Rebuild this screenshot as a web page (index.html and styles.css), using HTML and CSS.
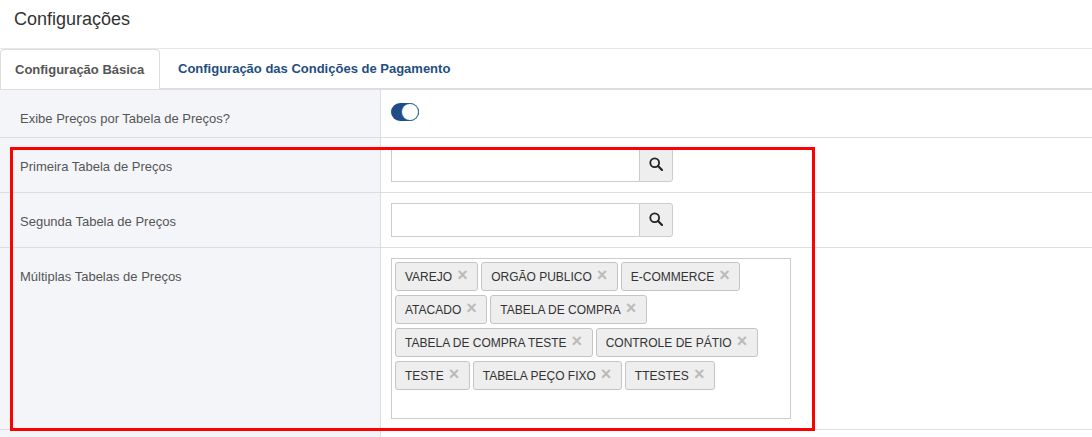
FILE: index.html
```html
<!DOCTYPE html>
<html lang="pt">
<head>
<meta charset="utf-8">
<title>Configurações</title>
<link rel="stylesheet" href="styles.css">
</head>
<body>
<header class="page-header">Configurações</header>
<nav class="tabs">
  <a class="tab tab-active">Configuração Básica</a>
  <a class="tab">Configuração das Condições de Pagamento</a>
</nav>
<main class="form">
  <div class="row row-toggle">
    <div class="label label-toggle">Exibe Preços por Tabela de Preços?</div>
    <div class="field"><span class="toggle"><span class="knob"></span></span></div>
  </div>
  <div class="row">
    <div class="label">Primeira Tabela de Preços</div>
    <div class="field">
      <div class="search"><span class="search-input"></span><span class="search-btn"><svg width="14" height="14" viewBox="0 0 14 14"><circle cx="5.7" cy="5.7" r="4.4" fill="none" stroke="#222" stroke-width="1.8"/><path d="M9 9l4 4" stroke="#222" stroke-width="2.2" stroke-linecap="round"/></svg></span></div>
    </div>
  </div>
  <div class="row">
    <div class="label">Segunda Tabela de Preços</div>
    <div class="field">
      <div class="search"><span class="search-input"></span><span class="search-btn"><svg width="14" height="14" viewBox="0 0 14 14"><circle cx="5.7" cy="5.7" r="4.4" fill="none" stroke="#222" stroke-width="1.8"/><path d="M9 9l4 4" stroke="#222" stroke-width="2.2" stroke-linecap="round"/></svg></span></div>
    </div>
  </div>
  <div class="row">
    <div class="label">Múltiplas Tabelas de Preços</div>
    <div class="field">
      <div class="tagbox">
        <span class="tag">VAREJO<i class="x">×</i></span>
        <span class="tag">ORGÃO PUBLICO<i class="x">×</i></span>
        <span class="tag">E-COMMERCE<i class="x">×</i></span>
        <span class="tag">ATACADO<i class="x">×</i></span>
        <span class="tag">TABELA DE COMPRA<i class="x">×</i></span>
        <span class="tag">TABELA DE COMPRA TESTE<i class="x">×</i></span>
        <span class="tag">CONTROLE DE PÁTIO<i class="x">×</i></span>
        <span class="tag">TESTE<i class="x">×</i></span>
        <span class="tag">TABELA PEÇO FIXO<i class="x">×</i></span>
        <span class="tag">TTESTES<i class="x">×</i></span>
      </div>
    </div>
  </div>
  <div class="row row-rest">
    <div class="label"></div>
    <div class="field"></div>
  </div>
</main>
<div class="highlight"></div>
</body>
</html>
```
FILE: styles.css
```css
* { box-sizing: border-box; }
html, body { margin: 0; height: 437px; overflow: hidden; }
body {
  position: relative;
  background: #fff;
  font-family: "Liberation Sans", Arial, sans-serif;
  color: #555;
}
.page-header {
  height: 49px;
  padding: 9px 14px 0;
  font-size: 18px;
  line-height: 20px;
  color: #333;
  border-bottom: 1px solid #e7e7e7;
}
.tabs {
  display: flex;
  height: 41px;
  border-bottom: 2px solid #ddd;
}
.tab {
  height: 41px;
  padding: 12px 14px 0 18px;
  font-size: 13px;
  line-height: 16px;
  font-weight: 700;
  color: #1f4e7f;
}
.tab-active {
  width: 160px;
  height: 40px;
  padding-left: 14px;
  color: #555;
  background: #fff;
  border: 1px solid #ddd;
  border-bottom: 0;
  border-radius: 4px 4px 0 0;
}
.row {
  display: flex;
  border-bottom: 1px solid #ddd;
}
.row-toggle { height: 48px; }
.row-rest { height: 8px; border-bottom: 0; }
.label {
  width: 381px;
  flex: none;
  padding: 19px 20px 9px;
  font-size: 13px;
  line-height: 20px;
  color: #555;
  background: #f4f5f9;
  border-right: 1px solid #ddd;
}
.field {
  flex: 1;
  padding: 10px;
}
.row-toggle .field { padding-top: 13px; }
.toggle {
  display: block;
  width: 28px;
  height: 18px;
  border-radius: 9px;
  background: #1f4e86;
  position: relative;
}
.knob {
  position: absolute;
  right: 1px;
  top: 1px;
  width: 16px;
  height: 16px;
  border-radius: 50%;
  background: #fff;
  box-shadow: 0 0 0 1px #2d6cab;
}
.search {
  display: flex;
  width: 282px;
  height: 34px;
}
.search-input {
  flex: 1;
  background: #fff;
  border: 1px solid #ccc;
  border-right: 0;
}
.search-btn {
  width: 34px;
  display: flex;
  align-items: center;
  justify-content: center;
  background: #eee;
  border: 1px solid #ccc;
  border-radius: 0 3px 3px 0;
  padding-bottom: 2px;
}
.tagbox {
  display: flex;
  flex-wrap: wrap;
  align-content: flex-start;
  gap: 4px 3px;
  width: 400px;
  height: 161px;
  padding: 3px;
  border: 1px solid #ccc;
  background: #fff;
}
.tag {
  display: inline-flex;
  align-items: flex-start;
  height: 29px;
  padding: 5px 9.5px 5px 9px;
  font-size: 12px;
  line-height: 18px;
  color: #333;
  background: #eee;
  border: 1px solid #c4c4c4;
  border-radius: 3px;
}
.x {
  margin-left: 5px;
  font-style: normal;
  font-weight: 700;
  font-size: 18px;
  line-height: 15px;
  color: #bbb;
}
.highlight {
  position: absolute;
  left: 10px;
  top: 147px;
  width: 805px;
  height: 284px;
  border: 3px solid #f00;
}
```
